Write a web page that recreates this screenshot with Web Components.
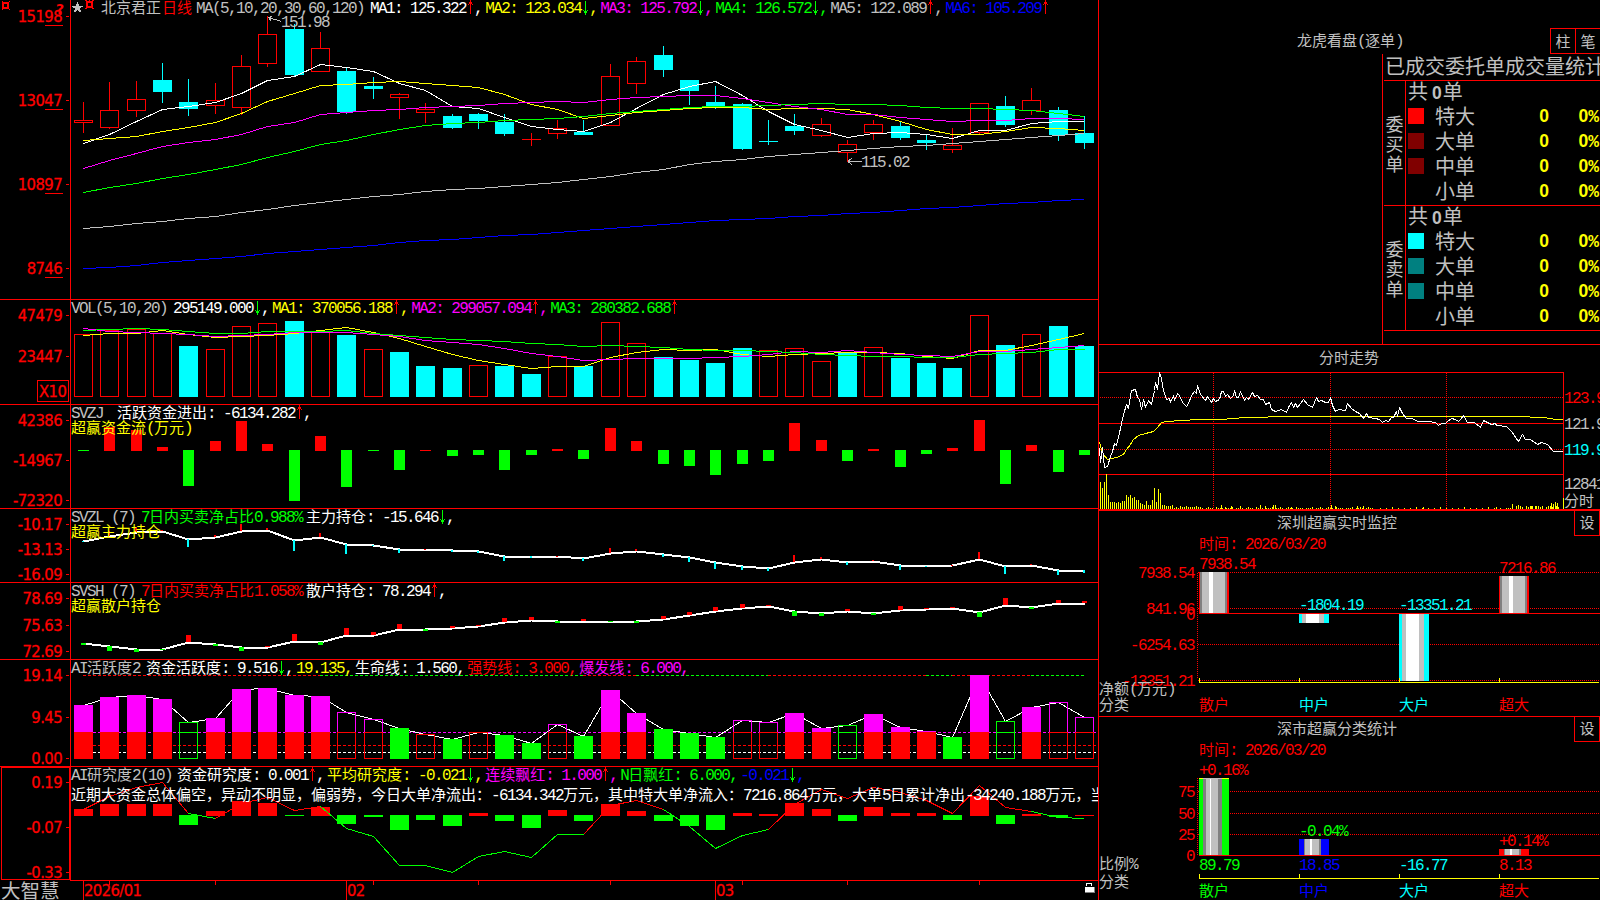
<!DOCTYPE html>
<html lang="zh-CN">
<head>
<meta charset="utf-8">
<title>北京君正 日线</title>
<style>
  html, body {
    margin: 0;
    height: 100%;
    background: #000;
  }
  body {
    display: flex;
    width: 1600px;
    height: 900px;
    overflow: hidden;
  }
</style>
</head>
<body>
<desk-charts>
  <chart-panel name="ma">
    <ind-item text="北京君正"></ind-item>
    <ind-item text="日线" color="#f00" gap="1"></ind-item>
    <ind-item text="MA(5,10,20,30,60,120)" gap="4"></ind-item>
    <ind-item text="MA1: 125.322" color="#fff" trend="up" gap="6"></ind-item>
    <ind-item text="MA2: 123.034" color="#ff0" trend="down"></ind-item>
    <ind-item text="MA3: 125.792" color="#f0f" trend="down"></ind-item>
    <ind-item text="MA4: 126.572" color="#0f0" trend="down"></ind-item>
    <ind-item text="MA5: 122.089" trend="up"></ind-item>
    <ind-item text="MA6: 105.209" color="#00f" trend="up" end></ind-item>
  </chart-panel>
  <chart-panel name="vol">
    <ind-item text="VOL(5,10,20)"></ind-item>
    <ind-item text="295149.000" color="#fff" trend="down" gap="6"></ind-item>
    <ind-item text="MA1: 370056.188" color="#ff0" trend="up"></ind-item>
    <ind-item text="MA2: 299057.094" color="#f0f" trend="up"></ind-item>
    <ind-item text="MA3: 280382.688" color="#0f0" trend="up" end></ind-item>
  </chart-panel>
  <chart-panel name="svzj">
    <ind-item text="SVZJ"></ind-item>
    <ind-item text="活跃资金进出: -6134.282" color="#fff" trend="up" gap="14"></ind-item>
    <ind-item slot="note" text="超赢资金流(万元)" color="#ff0"></ind-item>
  </chart-panel>
  <chart-panel name="svzl">
    <ind-item text="SVZL (7)"></ind-item>
    <ind-item text="7日内买卖净占比0.988%" color="#0f0" gap="6"></ind-item>
    <ind-item text="主力持仓: -15.646" color="#fff" trend="down" gap="4"></ind-item>
    <ind-item slot="note" text="超赢主力持仓" color="#ff0"></ind-item>
  </chart-panel>
  <chart-panel name="svsh">
    <ind-item text="SVSH (7)"></ind-item>
    <ind-item text="7日内买卖净占比1.058%" color="#f00" gap="6"></ind-item>
    <ind-item text="散户持仓: 78.294" color="#fff" trend="up" gap="4"></ind-item>
    <ind-item slot="note" text="超赢散户持仓" color="#ff0"></ind-item>
  </chart-panel>
  <chart-panel name="act">
    <ind-item text="AI活跃度2"></ind-item>
    <ind-item text="资金活跃度: 9.516" color="#fff" trend="down" gap="6"></ind-item>
    <ind-item text="19.135," color="#ff0"></ind-item>
    <ind-item text="生命线: 1.560," color="#fff"></ind-item>
    <ind-item text="强势线: 3.000," color="#f00"></ind-item>
    <ind-item text="爆发线: 6.000," color="#f0f"></ind-item>
  </chart-panel>
  <chart-panel name="study">
    <ind-item text="AI研究度2(10)"></ind-item>
    <ind-item text="资金研究度: 0.001" color="#fff" trend="up" gap="5"></ind-item>
    <ind-item text="平均研究度: -0.021" color="#ff0" trend="down"></ind-item>
    <ind-item text="连续飘红: 1.000" color="#f0f" trend="up"></ind-item>
    <ind-item text="N日飘红: 6.000," color="#0f0"></ind-item>
    <ind-item text="-0.021" color="#00f" trend="down"></ind-item>
    <ind-item slot="note" color="#fff" text="近期大资金总体偏空，异动不明显，偏弱势，今日大单净流出：-6134.342万元，其中特大单净流入：7216.864万元，大单5日累计净出-34240.188万元，当"></ind-item>
  </chart-panel>
  <time-axis></time-axis>
</desk-charts>
<desk-side>
  <order-stats></order-stats>
  <intraday-panel></intraday-panel>
  <flow-panel name="monitor"></flow-panel>
  <flow-panel name="stats"></flow-panel>
</desk-side>

<script>
const GRAY = '#c0c0c0'
const RED = '#f00'
const CYAN = '#0ff'
const GREEN = '#0f0'
const PINK = '#f0f'

// full width glyphs are 15px, half width ones 8px
const textStyle = `
  .t { font: 400 15px/16px "Noto Sans CJK SC", sans-serif; white-space: pre; }
  .m { font-family: "Liberation Mono", monospace; font-size: 16px; letter-spacing: -1.6px; }
  .ax {
    font: 400 16.5px "DejaVu Sans Condensed", "DejaVu Sans", sans-serif;
    font-stretch: condensed;
    letter-spacing: -.6px;
    fill: #f00;
    stroke: #f00;
    stroke-width: .3px;
  }
  svg { display: block; shape-rendering: crispEdges; overflow: hidden; }
`

const runs = (text, tag = 'span') =>
  text.replace(/[\x20-\x7e]+/g, s => `<${tag} class="m">${s}</${tag}>`)

const mount = (host, html) => {
  const template = document.createElement('template')
  template.innerHTML = html
  host.attachShadow({ mode: 'open' }).appendChild(template.content.cloneNode(true))
}

const rect = (x, y, w, h, fill) =>
  `<rect x="${x}" y="${y}" width="${w}" height="${h}" fill="${fill}"/>`
const box = (x, y, w, h, stroke) =>
  `<rect x="${x + 0.5}" y="${y + 0.5}" width="${w - 1}" height="${Math.max(h - 1, 0)}" fill="none" stroke="${stroke}"/>`
const line = (points, stroke, width = 1, extra = '') =>
  `<polyline points="${points}" fill="none" stroke="${stroke}" stroke-width="${width}" stroke-linejoin="bevel" ${extra}/>`
const label = (x, cy, text, fill, anchor = 'start') =>
  `<text class="t" x="${x}" y="${cy + 5}" fill="${fill}" text-anchor="${anchor}">${runs(text, 'tspan')}</text>`

// day column i on the shared time axis
const col = i => Math.round(83 + i * 26.342)
// series are kept in thirds of a pixel below the origin of their panel
const at = (origin, v) => origin + Math.floor(v / 3)
const series = (origin, values, stroke, width) =>
  line(values.map((v, i) => `${col(i) + 0.5},${at(origin, v) + 0.5}`).join(' '), stroke, width)
const parse = s => s.trim().split(/\s+/).map(v => [v[0], ...v.slice(1).split(',').map(Number)])
const nums = s => s.trim().split(/\s+/).map(Number)

const candles = parse(`
  r306,361,368,399 r246,331,382,387 r243,298,331,351 c189,240,276,309 c237,306,327,348
  r249,301,316,342 r165,199,322,345 r50,103,190,201 c72,87,225,228 r96,145,214,214
  c203,213,336,342 c231,258,267,297 r279,283,292,357 r309,328,337,369 c342,348,384,387
  c339,342,363,387 c342,366,402,408 r399,418,418,438 r360,385,401,417 c360,396,405,405
  r192,229,376,376 r171,184,250,282 c138,165,210,231 c240,240,273,315 c258,306,324,327
  c309,312,447,450 c360,423,426,435 c342,378,393,405 r354,373,406,411 r420,433,457,487
  r360,373,397,420 c363,378,414,420 c402,420,429,450 r384,436,448,459 r310,310,397,403
  c288,318,375,381 r264,301,331,346 c321,330,405,423 c349,399,429,447`)

const averages = [
  ['#fff', '430 402 364 328 318 307 280 241 229 193 202 214 250 271 318 325 353 379 388 394 368 324 283 259 244 285 333 372 390 412 400 397 402 415 392 391 371 364 364'],
  ['#ff0', '421 415 409 394 382 367 340 303 280 257 252 247 244 250 256 262 283 313 329 355 347 338 330 325 321 322 328 325 325 329 343 364 387 403 403 394 382 384 391'],
  [PINK, '505 481 460 439 427 418 403 379 366 343 337 331 328 322 319 316 310 307 304 307 298 293 290 287 287 294 306 319 328 342 344 351 358 364 361 361 356 355 358'],
  [GREEN, '577 562 550 536 524 509 493 473 454 433 420 403 388 376 370 367 361 357 355 349 341 334 328 323 319 319 317 314 310 313 313 316 321 324 325 327 331 340 349'],
  [GRAY, '685 679 671 664 656 649 638 628 617 607 598 590 583 575 569 565 560 553 547 538 529 518 507 494 485 479 470 463 457 451 445 440 436 430 424 418 412 406 401'],
  ['#00f', '805 801 796 787 781 775 769 760 754 748 742 736 728 721 718 712 707 703 697 691 686 680 674 668 662 659 655 650 646 640 637 632 626 622 616 610 607 602 598']
]

const drawMa = () => candles.map(([kind, high, top, bottom, low], i) => {
  const x = col(i)
  const t = at(0, top)
  const b = at(0, bottom)
  if (kind === 'c') {
    return rect(x, at(0, high), 1, at(0, low) - at(0, high), CYAN) + rect(x - 9, t, 19, b - t, CYAN)
  }
  return rect(x, at(0, high), 1, t - at(0, high), RED) +
    rect(x, b, 1, at(0, low) - b, RED) +
    (t === b ? rect(x - 9, t, 19, 1, RED) : box(x - 9, t, 19, b - t + 1, RED))
}).join('') +
  averages.map(([color, values]) => series(0, nums(values), color)).join('') +
  rect(1084, 116, 1, 18, CYAN) +
  line('281.5,21.5 268.5,17.5 272.5,16.5', GRAY) + line('268.5,17.5 271.5,21.5', GRAY) +
  label(281, 22, '151.98', GRAY) +
  line('862,161.5 848,161.5 852,158', GRAY) + line('848,161.5 852,165', GRAY) +
  label(861, 162, '115.02', GRAY)

const volumes = parse(`
  r133 r120 r117 r130 c168 r178 r109 r100 c93 r126 c135 r178 c186 c228 c234 r226 c228 c252 r199 c228
  r97 r160 c201 c210 c219 c174 r181 r175 r214 c186 r172 c204 c219 c234 r76 c165 r133 c108 c168`)
const volumeAverages = [
  ['#ff0', '136 130 129 122 133 142 139 136 130 121 112 127 145 169 193 211 223 235 230 230 203 187 178 181 178 193 199 193 190 187 187 190 199 205 182 181 166 149 130'],
  [PINK, '115 124 128 131 134 139 136 132 127 127 127 133 139 151 156 163 175 190 199 211 208 205 205 205 203 199 194 185 187 181 188 192 196 199 184 184 178 173 166'],
  [GREEN, '121 118 115 118 124 130 130 125 124 123 121 129 135 142 147 151 154 160 163 169 166 169 173 178 181 181 184 187 192 196 199 199 202 203 194 190 187 179 178']
]

const drawVol = () => volumes.map(([kind, top], i) => {
  const y = at(290, top)
  return kind === 'c' ? rect(col(i) - 9, y, 19, 397 - y, CYAN) : box(col(i) - 9, y, 19, 397 - y, RED)
}).join('') + volumeAverages.map(([color, values]) => series(290, nums(values), color)).join('')

// red bars stand on the zero line, green ones hang from it
const zeroBars = (origin, values, half) => parse(values).map(([kind, v], i) => {
  const x = col(i) - half
  const w = half * 2 + 1
  const zero = at(origin, 480)
  return kind === 'r'
    ? rect(x, at(origin, v), w, zero + 1 - at(origin, v), RED)
    : rect(x, zero, w, Math.max(at(origin, v) - zero, 1), GREEN)
}).join('')

const drawSvzj = () => zeroBars(290, `
  g483 r411 r420 r471 g588 r453 r393 r462 g633 r438 g591 g483 g540 r480 g498 g495 g540 g495 r477 g507
  r414 r453 g522 g528 g555 g522 g513 r399 r450 g513 r477 g531 g492 r474 r390 g582 r465 g546 g495`, 5)

const sticks = (values, marks, left, width) => series(500, values, '#fff', 2) +
  parse(marks).map(([kind, v], i) => {
    const a = at(500, values[i])
    const b = at(500, v)
    const fill = { r: RED, c: CYAN, g: GREEN }[kind]
    return rect(col(i) - left, Math.min(a, b), width, Math.max(Math.abs(a - b), 1), fill)
  }).join('')

const drawSvzl = () => sticks(
  nums('124 110 96 95 118 112 95 90 121 113 134 135 148 149 151 154 168 168 169 175 160 155 163 172 187 199 205 188 179 186 185 197 198 197 177 198 197 212 212'),
  `c126 r94 r82 r90 c141 r105 r72 r84 c153 r101 c162 c138 c161 r147 c156 c159 c183 c174 r168 c183
   r144 r147 c171 c186 c207 c210 c213 r165 r171 c195 r182 c210 c201 r195 r156 c222 r192 c225 c219`, 1, 2)

const drawSvsh = () => sticks(
  nums('431 440 447 447 428 434 441 441 423 427 405 405 387 387 386 380 367 362 363 363 363 363 359 347 334 325 320 334 340 335 340 331 329 325 337 317 321 310 309'),
  `g435 g453 g456 g450 r405 g438 g453 r440 r402 g435 r384 r396 r372 g393 r378 r375 r354 r351 g369 r357
   g366 g369 r348 r336 r321 r312 r315 g348 g348 r327 g345 r318 r324 r323 g351 r294 g327 r300 r303`, 2, 5)

// m: filled, o: hollow, g: filled green, h: hollow green
const activity = parse(`
  m150 m126 m120 m132 h202 m189 m102 m99 m120 m123 o172 o193 g219 o238 g252 o233 g240 g264 o208 g243
  m105 m174 g222 g234 g246 o196 o202 m174 m219 h211 m177 m216 m228 g246 m60 h199 m156 o142 o187`)

const drawAct = () => {
  const split = at(655, 232)
  const base = at(655, 312)
  const dash = (x1, x2, y, color) => line(`${x1},${y + 0.5} ${x2},${y + 0.5}`, color, 1, 'stroke-dasharray="3 2"')
  const bars = activity.map(([kind, v], i) => {
    const x = col(i) - 9
    const y = at(655, v)
    switch (kind) {
      case 'm': return rect(x, y, 19, split - y, PINK) + rect(x, split, 19, base - split, RED)
      case 'g': return rect(x, y, 19, base - y, GREEN)
      case 'h': return box(x, y, 19, base - y, GREEN) + rect(x, split, 19, 1, GREEN)
      default: return y < split
        ? box(x, y, 19, split - y + 1, PINK) + box(x, split, 19, base - split, RED)
        : box(x, y, 19, base - y, RED)
    }
  }).join('')
  const ceiling = [[0, RED], [9, GREEN], [19, RED], [21, GREEN], [26, RED], [32, GREEN], [33, RED], [36, GREEN], [38]]
  return ceiling.slice(0, -1).map(([i, color], k) => dash(col(i), col(ceiling[k + 1][0]), at(655, 61), color)).join('') +
    dash(83, 1098, split, PINK) + dash(83, 1098, at(655, 271), RED) + dash(83, 1098, at(655, 292), '#fff') +
    series(655, activity.map(a => a[1]), '#fff') + bars
}

const study = nums('462 424 396 382 475 490 445 426 466 455 520 544 631 631 652 604 589 607 538 538 450 436 463 515 580 541 523 447 403 430 398 412 435 475 390 457 468 487 491')

const drawStudy = () => {
  const spans = [[0, 4, RED], [4, 5, GREEN], [5, 9, RED], [9, 19, GREEN], [19, 22, RED], [22, 26, GREEN], [26, 36, RED], [36, 38, GREEN]]
  return zeroBars(655, `
    r462 r447 r447 r447 g510 r468 r438 r444 g483 r456 g507 g486 g525 g495 g513 r474 g498 g519 r465 g498
    r447 r468 g498 g513 g525 r474 r477 r444 r462 g498 r456 r474 r474 g495 r423 g507 r477 g486 r480`, 9) +
    spans.map(([a, b, color]) => line(study.slice(a, b + 1)
      .map((v, k) => `${col(a + k) + 0.5},${at(655, v) + 0.5}`).join(' '), color)).join('')
}

const panels = {
  ma: { top: 0, bottom: 299, draw: drawMa, underline: true, ticks: [[16, '15198'], [100, '13047'], [184, '10897'], [268, '8746']] },
  vol: { top: 299, bottom: 404, draw: drawVol, unit: 'X10', ticks: [[315, '47479'], [356, '23447']] },
  svzj: { top: 404, bottom: 508, draw: drawSvzj, ticks: [[420, '42386'], [460, '-14967'], [500, '-72320']] },
  svzl: { top: 508, bottom: 582, draw: drawSvzl, ticks: [[524, '-10.17'], [549, '-13.13'], [574, '-16.09']] },
  svsh: { top: 582, bottom: 659, draw: drawSvsh, ticks: [[598, '78.69'], [625, '75.63'], [651, '72.69']] },
  act: { top: 659, bottom: 766, draw: drawAct, ticks: [[675, '19.14'], [717, '9.45'], [758, '0.00']] },
  study: { top: 766, bottom: 880, draw: drawStudy, selected: true, ticks: [[782, '0.19'], [827, '-0.07'], [872, '-0.33']] }
}

class IndItem extends HTMLElement {
  connectedCallback () {
    const trend = this.getAttribute('trend')
    const up = trend === 'up'
    const arrow = `
      <svg width="8" height="16" viewBox="0 0 8 16" fill="${up ? RED : GREEN}">
        <g ${up ? '' : 'transform="matrix(1 0 0 -1 0 15)"'}>
          <rect x="4" width="1" height="14"/><rect x="3" y="2" width="3" height="2"/>
          <rect x="2" y="4" width="1" height="1"/><rect x="6" y="4" width="1" height="1"/>
        </g>
      </svg>`
    mount(this, `
      <style>
        ${textStyle}
        :host {
          display: flex;
          flex: none;
          height: 16px;
          margin-left: ${this.getAttribute('gap') || 0}px;
          margin-right: ${/,$/.test(this.getAttribute('text')) || (trend && !this.hasAttribute('end')) ? 3 : 0}px;
          color: ${this.getAttribute('color') || GRAY};
        }
        .t { line-height: 14px; }
        svg { flex: none; }
      </style>
      <span class="t">${runs(this.getAttribute('text'))}</span>${trend ? arrow : ''}${trend && !this.hasAttribute('end') ? '<span class="t"><span class="m">,</span></span>' : ''}
    `)
  }
}

class ChartPanel extends HTMLElement {
  connectedCallback () {
    const name = this.getAttribute('name')
    const { top, bottom, draw, ticks, underline, unit, selected } = panels[name]
    const y = top ? top + 1 : 0
    const height = bottom - y
    const axis = ticks.map(([cy, text]) =>
      `<text class="ax" x="62" y="${cy + 6}" text-anchor="end">${text}</text>` +
      rect(66, cy, 3, 1, RED) + (underline ? rect(45, cy + 9, 18, 1, RED) : '')).join('')
    const icons = name === 'ma' ? `
      <g fill="none" stroke="#f00" stroke-width="2"><rect x="3" y="3" width="5" height="5"/></g>
      <path d="M2 1h1v1h-1zM9 1h1v1h-1zM2 9h1v1h-1zM9 9h1v1h-1z" fill="#f00"/>
      <text x="56" y="13.500" font-family="DejaVu Sans" font-weight="700" font-size="14" fill="#f00">?</text>` : ''
    const badges = name === 'ma' ? `
      <svg width="30" height="16" viewBox="71 0 30 16">
        <path d="M77.500 2l1.700 4h4.200l-3.400 2.700 1.300 4.300-3.800-2.600-3.800 2.600 1.300-4.300L71.600 6h4.200z" fill="${GRAY}"/>
        <rect x="87" y="2" width="5" height="5" fill="none" stroke="#f00" stroke-width="2"/>
        <path d="M85 0h2v1h-2zM92 0h2v1h-2zM85 8h2v1h-2zM92 8h2v1h-2zM89 0h1v1h-1z" fill="#f00"/>
      </svg>` : ''
    mount(this, `
      <style>
        ${textStyle}
        :host {
          display: grid;
          grid-template-columns: 71px 1fr;
          height: ${height}px;
          ${top ? 'border-top: 1px solid #f00;' : ''}
          position: relative;
          overflow: hidden;
        }
        .legend {
          position: absolute;
          left: 71px;
          right: 0;
          top: 0;
        }
        .row { display: flex; height: ${name === 'study' ? 20 : 15}px; }
      </style>
      <svg width="71" height="${height}" viewBox="0 ${y} 71 ${height}">
        ${rect(70, y, 1, height, RED)}${axis}${icons}
        ${unit ? box(37, 380, 32, 22, RED) + `<text class="ax" x="39" y="397">${unit}</text>` : ''}
        ${selected ? box(1, 767, 69, 113, RED) : ''}
      </svg>
      <svg width="1027" height="${height}" viewBox="71 ${y} 1027 ${height}">${draw()}</svg>
      <div class="legend">
        <div class="row">${badges}<slot></slot></div>
        <div class="row"><slot name="note"></slot></div>
      </div>
    `)
  }
}

class TimeAxis extends HTMLElement {
  connectedCallback () {
    const months = [[0, '2026/01'], [10, '02'], [24, '03']]
    mount(this, `
      <style>
        ${textStyle}
        :host { display: grid; grid-template-columns: 70px 1fr; height: 20px; }
        .brand { font: 400 19.5px/19px "Noto Sans CJK SC", sans-serif; color: ${GRAY}; margin: 0 0 0 1px; white-space: nowrap; }
      </style>
      <p class="brand">大智慧</p>
      <svg width="1028" height="20" viewBox="70 880 1028 20">
        ${rect(70, 880, 1028, 1, RED)}
        ${[1, 5, 11, 15, 20, 25, 29, 34].map(i => rect(col(i), 881, 1, 4, RED)).join('')}
        ${months.map(([i, text]) => rect(col(i), 881, 1, 19, RED) +
          `<text class="ax" x="${col(i) + 1}" y="896">${text}</text>`).join('')}
        <path d="M1086.500 886v-2.500h5v2.500" fill="none" stroke="#fff"/>
        <rect x="1085" y="887" width="9" height="5" fill="#fff"/>
        <path d="M1085 892.500h9.500v-6" fill="none" stroke="#808080"/>
      </svg>
    `)
  }
}

class DeskCharts extends HTMLElement {
  connectedCallback () {
    mount(this, `
      <style>
        :host {
          display: flex;
          flex-direction: column;
          box-sizing: border-box;
          width: 1099px;
          flex: none;
          border-right: 1px solid #f00;
          overflow: hidden;
        }
      </style>
      <slot></slot>
    `)
  }
}

class DeskSide extends HTMLElement {
  connectedCallback () {
    mount(this, `
      <style>
        :host { display: flex; flex-direction: column; width: 501px; flex: none; overflow: hidden; }
      </style>
      <slot></slot>
    `)
  }
}

class OrderStats extends HTMLElement {
  connectedCallback () {
    const group = (side, colors) => `
      <section>
        <div class="side">${[...side].map(c => `<span>${c}</span>`).join('')}</div>
        <div class="rows">
          <p class="total">共<b>0</b>单</p>
          ${['特大', '大单', '中单', '小单'].map((name, i) => `
            <div class="entry"><i style="background: ${colors[i]}"></i><span>${name}</span><b>0</b><b>0<u>%</u></b></div>`).join('')}
        </div>
      </section>`
    mount(this, `
      <style>
        ${textStyle}
        :host {
          display: grid;
          grid-template-rows: 54px 290px;
          height: 344px;
          color: ${GRAY};
          font: 400 20px/25px "Noto Sans CJK SC", sans-serif;
        }
        header { display: flex; justify-content: flex-end; padding-top: 28px; height: 26px; }
        header .title { margin-right: 147px; line-height: 24px; }
        button {
          all: unset;
          display: grid;
          place-items: center;
          box-sizing: border-box;
          width: 26px;
          height: 26px;
          border: 1px solid #f00;
        }
        button + button { border-left: 0; width: 24px; border-right: 0; }
        .book { margin-left: 283px; border-left: 1px solid #f00; padding-left: 1px; overflow: hidden; }
        h2 { margin: 0; font: inherit; line-height: 23px; height: 26px; padding-left: 1px; white-space: nowrap; }
        section { display: grid; grid-template-columns: 22px 1fr; height: 124px; border-top: 1px solid #f00; }
        section:last-of-type { border-bottom: 1px solid #f00; }
        .side {
          display: flex;
          flex-direction: column;
          justify-content: center;
          align-items: center;
          border-right: 1px solid #f00;
          font-size: 18px;
          line-height: 20px;
        }
        .rows { padding-left: 2px; }
        .total { margin: 0; height: 22px; line-height: 20px; }
        .total b { margin: 0 1px 0 4px; line-height: 20px; }
        .entry { display: grid; grid-template-columns: 27px 95px 20px 1fr; height: 25px; align-items: center; line-height: 23px; }
        .entry i { width: 16px; height: 16px; }
        .entry b { color: #ff0; text-align: right; line-height: 24px; padding-right: 1px; }
        b { font: 700 17.5px/25px "Liberation Sans", sans-serif; }
        u { font: 700 18px/20px "Liberation Mono", monospace; text-decoration: none; }
      </style>
      <header>
        <span class="t title">龙虎看盘<span class="m">(</span>逐单<span class="m">)</span></span>
        <button><span class="t">柱</span></button><button><span class="t">笔</span></button>
      </header>
      <div class="book">
        <h2>已成交委托单成交量统计</h2>
        ${group('委买单', [RED, '#800000', '#800000', 'none'])}
        ${group('委卖单', [CYAN, '#008080', '#008080', 'none'])}
      </div>
    `)
  }
}

// minute chart, thirds of a pixel from (1095, 340)
const price = '12,325 16,368 21,322 28,382 38,380 45,350 52,335 59,311 65,317 75,265 85,222 94,193 101,206 109,152 121,148 128,172 134,178 139,208 146,178 152,202 160,182 169,192 177,150 182,127 187,148 194,98 200,115 206,152 215,178 222,174 227,187 234,166 239,180 246,160 254,166 262,188 274,199 281,190 289,165 298,155 303,160 307,137 316,163 331,181 337,168 349,187 355,175 361,185 374,177 380,155 385,155 392,168 398,163 407,174 414,165 419,152 425,172 430,172 437,154 447,180 453,172 461,178 472,158 478,170 487,166 495,178 504,178 512,192 524,188 530,208 540,215 558,208 573,216 580,203 588,187 596,203 602,190 606,202 625,178 636,194 653,203 665,173 671,185 678,181 690,188 700,187 706,173 711,195 721,214 731,209 752,211 758,190 768,206 780,214 792,220 806,236 814,221 821,232 840,235 852,238 863,247 870,240 880,243 888,232 895,232 904,214 907,228 913,203 923,220 935,236 950,236 970,243 1000,243 1020,247 1031,256 1040,250 1050,250 1058,245 1070,235 1080,238 1090,244 1097,238 1105,226 1116,246 1138,248 1155,262 1166,240 1190,254 1200,250 1205,256 1235,260 1250,273 1270,303 1283,283 1292,297 1305,299 1328,313 1340,308 1358,314 1374,334 1403,334'
const mean = '12,307 18,328 25,342 38,357 65,352 85,342 95,327 105,313 115,297 130,286 150,280 175,275 187,262 200,248 215,245 260,241 310,238 375,237 450,233 585,230 720,229 1100,229 1265,230 1345,233 1385,237 1403,238'
const opening = nums('427 444 427 403 465 487 487 487 490 487 490 484 484 465 472 465 474 472 480 480 490 492 497 484 497 497 481 444 487 447 459 497 495 498 498 498 495 504 503 505 498 501 501 499 501 501 501 501 498 501')
const spikes = { 380: 495, 392: 501, 410: 499, 437: 498, 497: 495, 512: 498, 536: 495, 542: 497, 590: 501, 710: 495, 721: 498, 788: 498, 806: 498, 986: 501, 1205: 502, 1252: 492, 1264: 498, 1270: 495, 1310: 498, 1322: 498, 1370: 489, 1376: 492, 1382: 486, 1388: 491 }

class IntradayPanel extends HTMLElement {
  connectedCallback () {
    const px = (x, y) => `${Math.floor(1095 + x / 3) + 0.5},${Math.floor(340 + y / 3) + 0.5}`
    const trace = (points, color) => line(points.split(' ').map(p => px(...p.split(','))).join(' '), color)
    const dots = points => line(points, RED, 1, 'stroke-dasharray="1 1"')
    const bar = (x, y) => rect(Math.floor(1095 + x / 3), Math.floor(340 + y / 3), 1, 509 - Math.floor(340 + y / 3), '#ff0')
    let quiet = ''
    for (let x = 316, k = 0; x < 1395; x += 6, k++) {
      const gap = (x > 840 && x < 1230) ? k % 3 !== 0 : k % 5 === 2
      if (!gap) quiet += bar(x, x > 1250 ? 499 + k % 3 : (k * 7 % 4 === 0 ? 501 : 504))
    }
    mount(this, `
      <style>
        ${textStyle}
        :host { display: block; height: 164px; border-top: 1px solid #f00; border-bottom: 2px solid #f00; color: ${GRAY}; }
        .title { display: block; height: 27px; line-height: 23px; padding-left: 220px; }
      </style>
      <span class="t title">分时走势</span>
      <svg width="501" height="137" viewBox="1099 372 501 137">
        ${rect(1099, 372, 465, 1, RED)}${rect(1563, 372, 1, 137, RED)}
        ${rect(1099, 423, 464, 1, RED)}${rect(1099, 474, 464, 1, RED)}
        ${dots('1100,397.5 1563,397.5')}${dots('1100,449.5 1563,449.5')}
        ${[1213, 1330, 1446].map(x => dots(`${x + 0.5},373 ${x + 0.5},509`)).join('')}
        ${opening.map((v, i) => bar(16 + i * 6, v)).join('')}${quiet}
        ${Object.entries(spikes).map(([x, y]) => bar(+x, y)).join('')}${bar(1406, 475)}
        ${trace(mean, '#ff0')}${trace(price, '#fff')}
        ${label(1564, 398, '123.9', RED)}${label(1564, 424, '121.9', GRAY)}${label(1564, 450, '119.9', CYAN)}
        ${label(1564, 484, '12841', GRAY)}${label(1564, 501, '分时', GRAY)}
      </svg>
    `)
  }
}

// bars are [slot, top, bottom, stripes], a stripe being [right edge, fill]
const DIM = '#808080'
const redBar = [[1, RED], [3, DIM], [10, GRAY], [14, '#fff'], [26, GRAY], [28, DIM], [30, RED]]
const cyanBar = [[3, CYAN], [7, GRAY], [20, '#fff'], [25, GRAY], [30, CYAN]]
const thinBar = color => [[5, color], [6, DIM], [11, GRAY], [13, '#fff'], [20, GRAY], [22, DIM], [30, color]]
const flows = {
  monitor: {
    title: '深圳超赢实时监控',
    top: 511,
    height: 205,
    time: 544,
    axis: [573, 679],
    grid: [[572, '7938.54'], [608, '841.96'], [644, '-6254.63'], [680, '-13351.21']],
    zero: 613,
    zeroLabel: 615,
    rule: 682,
    bars: [[0, 572, 613, redBar], [1, 614, 623, cyanBar], [2, 614, 681, cyanBar], [3, 576, 613, redBar]],
    values: [[0, 564, '7938.54', RED], [1, 605, '-1804.19', CYAN], [2, 605, '-13351.21', CYAN], [3, 568, '7216.86', RED]],
    names: [689, '净额(万元)', 705],
    labels: [705, RED, CYAN, CYAN, RED]
  },
  stats: {
    title: '深市超赢分类统计',
    top: 717,
    height: 183,
    time: 750,
    axis: [778, 855],
    grid: [[791, '75'], [813, '50'], [834, '25']],
    zero: 855,
    zeroLabel: 856,
    rule: 878,
    bars: [
      [0, 778, 855, [[4, GREEN], [7, DIM], [11, GRAY], [12, '#fff'], [19, GRAY], [23, DIM], [30, GREEN]]],
      [1, 839, 855, thinBar('#00f')],
      [3, 849, 855, thinBar(RED)]
    ],
    values: [[0, 770, '+0.16%', RED], [1, 831, '-0.04%', GREEN], [3, 841, '+0.14%', RED],
      [0, 865, '89.79', GREEN], [1, 865, '18.85', '#00f'], [2, 865, '-16.77', CYAN], [3, 865, '8.13', RED]],
    names: [864, '比例%', 882],
    labels: [891, GREEN, '#00f', CYAN, RED]
  }
}

class FlowPanel extends HTMLElement {
  connectedCallback () {
    const name = this.getAttribute('name')
    const f = flows[name]
    const slotX = i => 1199 + i * 100
    const dots = points => line(points, RED, 1, 'stroke-dasharray="1 1"')
    const bars = f.bars.map(([i, top, bottom, stripes]) => stripes.map(([right, fill], k) => {
      const left = k ? stripes[k - 1][0] : 0
      return rect(slotX(i) + left, top, right - left, bottom - top, fill)
    }).join('')).join('')
    const body = f.top + 25
    mount(this, `
      <style>
        ${textStyle}
        :host { display: block; height: ${f.height}px; color: ${GRAY}; ${name === 'stats' ? 'border-top: 1px solid #f00;' : ''} }
        header { display: flex; height: 25px; }
        .title { line-height: 22px; padding-left: 178px; flex: 1; }
        button {
          all: unset;
          display: grid;
          place-items: center;
          box-sizing: border-box;
          width: 26px;
          height: 25px;
          border: 1px solid #f00;
          border-top: 0;
        }
        button .t { line-height: 22px; height: 24px; }
      </style>
      <header>
        <span class="t title">${f.title}</span>
        <button><span class="t">设</span></button>
      </header>
      <svg width="501" height="${f.height - 25}" viewBox="1099 ${body} 501 ${f.height - 25}">
        ${label(1199, f.time, '时间: 2026/03/20', RED)}
        ${dots(`1197.5,${f.axis[0]} 1197.5,${f.axis[1]}`)}
        ${f.grid.map(([y, text]) => dots(`1198,${y + 0.5} 1600,${y + 0.5}`) + label(1194, y + 1, text, RED, 'end')).join('')}
        ${label(1194, f.zeroLabel, '0', RED, 'end')}
        ${bars}
        ${rect(1199, f.zero, 401, 1, RED)}
        ${name === 'stats' ? rect(1199, 778, 30, 1, '#ff0') + rect(1203, 778, 19, 1, GRAY) : ''}
        ${rect(1199, f.rule, 400, 1, '#ff0')}
        ${[0, 1, 2, 3].map(i => rect(slotX(i), f.rule - 4, 1, 4, '#ff0')).join('')}
        ${f.values.map(([i, cy, text, fill]) => label(slotX(i), cy, text, fill)).join('')}
        ${label(1099, f.names[0], f.names[1], GRAY)}${label(1099, f.names[2], '分类', GRAY)}
        ${['散户', '中户', '大户', '超大'].map((text, i) => label(slotX(i), f.labels[0], text, f.labels[i + 1])).join('')}
      </svg>
    `)
  }
}

customElements.define('ind-item', IndItem)
customElements.define('chart-panel', ChartPanel)
customElements.define('time-axis', TimeAxis)
customElements.define('desk-charts', DeskCharts)
customElements.define('desk-side', DeskSide)
customElements.define('order-stats', OrderStats)
customElements.define('intraday-panel', IntradayPanel)
customElements.define('flow-panel', FlowPanel)
</script>
</body>
</html>
